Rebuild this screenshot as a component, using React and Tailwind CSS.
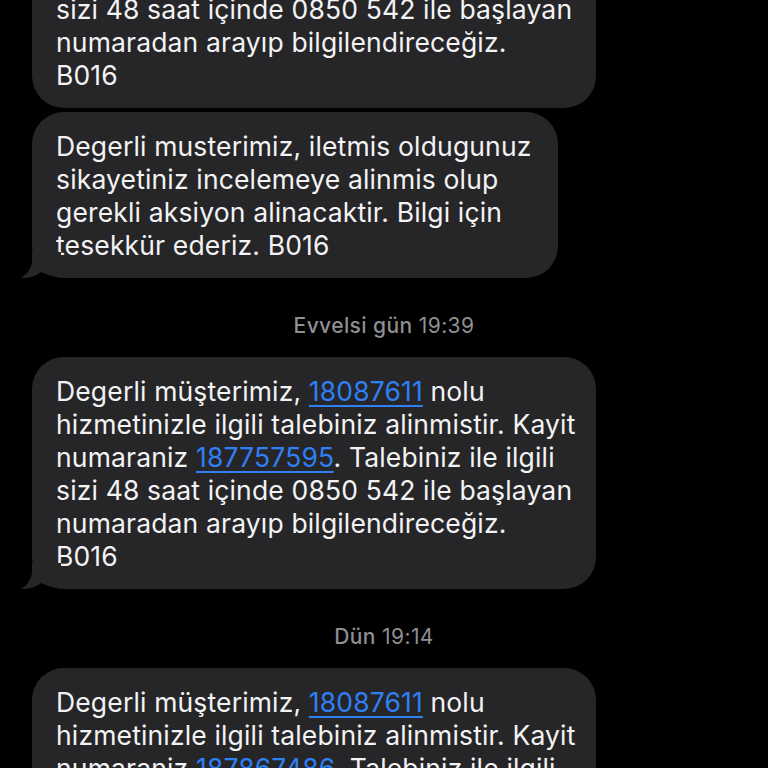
const font = { fontFamily: 'Inter, "Noto Sans", sans-serif' };

function Link({ children }) {
  return <span className="text-[#2f7ff5] underline decoration-[1.5px] underline-offset-[4px]">{children}</span>;
}

function Tail() {
  return (
    <svg className="absolute left-[-11px] bottom-0" width="40" height="26" viewBox="0 0 40 26">
      <path d="M11 0 L11 8 C11 16 6 22 0 26 C8 26 15 24 20 20 C24 22 30 24 40 26 L40 0 Z" fill="#262628" />
    </svg>
  );
}

function Bubble({ lines, width, tail }) {
  return (
    <div className="relative ml-[32px]" style={{ width }}>
      <div className="rounded-[32px] bg-[#262628] pl-[24px] pr-[20px] pt-[18px] pb-[16px] text-[26.5px] leading-[33px] tracking-[0.15px] text-[#f3f3f5] whitespace-nowrap">
        {lines.map((l, i) => (
          <div key={i}>{l}</div>
        ))}
      </div>
      {tail && <Tail />}
    </div>
  );
}

function Stamp({ day, time }) {
  return (
    <div className="text-center text-[21px] leading-[22px] tracking-[0.4px] text-[#8e8e93] mt-[37px] mb-[20px]">
      <span className="font-medium">{day}</span> {time}
    </div>
  );
}

const confirmLines = (ticket) => [
  <>Degerli müşterimiz, <Link>18087611</Link> nolu</>,
  'hizmetinizle ilgili talebiniz alinmistir. Kayit',
  <>numaraniz <Link>{ticket}</Link>. Talebiniz ile ilgili</>,
  'sizi 48 saat içinde 0850 542 ile başlayan',
  'numaradan arayıp bilgilendireceğiz.',
  'B016',
];

export default function App() {
  return (
    <div className="h-screen w-full overflow-hidden bg-black" style={font}>
      <div className="flex flex-col -mt-[124px]">
        <Bubble width={564} lines={confirmLines('187757595')} />
        <div className="h-[4px]" />
        <Bubble
          width={526}
          tail
          lines={[
            'Degerli musterimiz, iletmis oldugunuz',
            'sikayetiniz incelemeye alinmis olup',
            'gerekli aksiyon alinacaktir. Bilgi için',
            'tesekkür ederiz. B016',
          ]}
        />
        <Stamp day="Evvelsi gün" time="19:39" />
        <Bubble width={564} tail lines={confirmLines('187757595')} />
        <Stamp day="Dün" time="19:14" />
        <Bubble width={564} tail lines={confirmLines('187867486')} />
      </div>
    </div>
  );
}
